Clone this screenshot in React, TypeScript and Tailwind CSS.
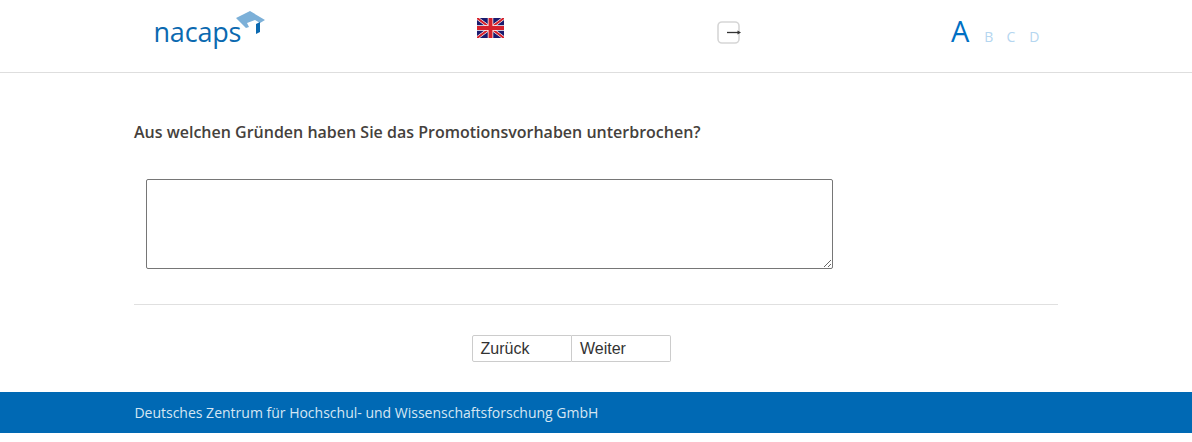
const SANS = "font-['Open_Sans',sans-serif]";

function CapMark() {
  return (
    <svg width="30" height="26" viewBox="0 0 30 26" className="mt-[10px] ml-[-6px]">
      <path d="M1 8 L15 1 L30 10 L25 13 L20 10 L12 13 L14 17 L11 18 Z" fill="#7cb0d8" />
      <path d="M21 14 L25 12 L25 22 L21 24 Z" fill="#0b69b0" />
    </svg>
  );
}

function UkFlag() {
  return (
    <svg width="27" height="20" viewBox="0 0 27 20">
      <rect width="27" height="20" fill="#1a1a6e" />
      <path d="M0 0 L27 20 M27 0 L0 20" stroke="#fff" strokeWidth="3.2" />
      <path d="M0 0 L27 20 M27 0 L0 20" stroke="#d5202b" strokeWidth="2" />
      <path d="M13.5 0 V20 M0 10 H27" stroke="#fff" strokeWidth="5.5" />
      <path d="M13.5 0 V20 M0 10 H27" stroke="#d5202b" strokeWidth="4" />
    </svg>
  );
}

function LogoutIcon() {
  return (
    <svg width="25" height="24" viewBox="0 0 25 24">
      <rect x="1" y="1" width="21" height="21" rx="4" fill="#fff" stroke="#d6d6d6" strokeWidth="1.6" />
      <path d="M10 11.5 H21" stroke="#333" strokeWidth="1.3" />
      <path d="M20.5 9.5 L24 11.5 L20.5 13.5 Z" fill="#333" />
    </svg>
  );
}

export default function App() {
  return (
    <div className={`${SANS} bg-white min-h-[442px] flex flex-col`}>
      <header className="h-[73px] border-b border-[#dedede] pl-[153.5px] grid grid-cols-[323.5px_240px_234px_auto]">
        <div className="flex items-start">
          <span className="mt-[9px] text-[27px] font-medium leading-[46px] text-[#0b69b0] tracking-[-0.2px]">nacaps</span>
          <CapMark />
        </div>
        <div className="pt-[18px]">
          <UkFlag />
        </div>
        <div className="pt-[21px]">
          <LogoutIcon />
        </div>
        <div className="flex items-start gap-[14px] pt-[11px]">
          <span className="text-[29px] leading-[40px] text-[#0070c4]">A</span>
          <span className="text-[14px] leading-[20px] mt-[16px] ml-[1px] mr-[-1px] text-[#b5d6f0]">B</span>
          <span className="text-[14px] leading-[20px] mt-[16px] text-[#b5d6f0]">C</span>
          <span className="text-[14px] leading-[20px] mt-[16px] text-[#b5d6f0]">D</span>
        </div>
      </header>

      <main className="w-[924px] ml-[134px]">
        <h1 className="mt-[48px] text-[16px] leading-[22px] font-semibold text-[#45413c]">
          Aus welchen Gründen haben Sie das Promotionsvorhaben unterbrochen?
        </h1>
        <div className="mt-[36px] pl-[12px] flex">
          <textarea className="w-[687px] h-[90px] border border-[#767676] rounded-[2px] bg-white" />
        </div>
        <div className="mt-[35px] border-t border-[#e0e0e0]" />
        <div className="mt-[30px] pl-[338px] flex font-['Liberation_Sans',sans-serif]">
          <button className="w-[100px] h-[27px] border border-[#cccccc] rounded-l-[2px] pl-[7.5px] text-left text-[16px] text-[#333333] bg-white">
            Zurück
          </button>
          <button className="w-[99px] h-[27px] border border-l-0 border-[#cccccc] rounded-r-[2px] pl-[8px] text-left text-[16px] text-[#333333] bg-white">
            Weiter
          </button>
        </div>
      </main>

      <footer className="mt-[30px] h-[41px] bg-[#0069b4] pl-[134.4px] flex items-center text-[14px] text-[#d5e6f3]">
        Deutsches Zentrum für Hochschul- und Wissenschaftsforschung GmbH
      </footer>
    </div>
  );
}
